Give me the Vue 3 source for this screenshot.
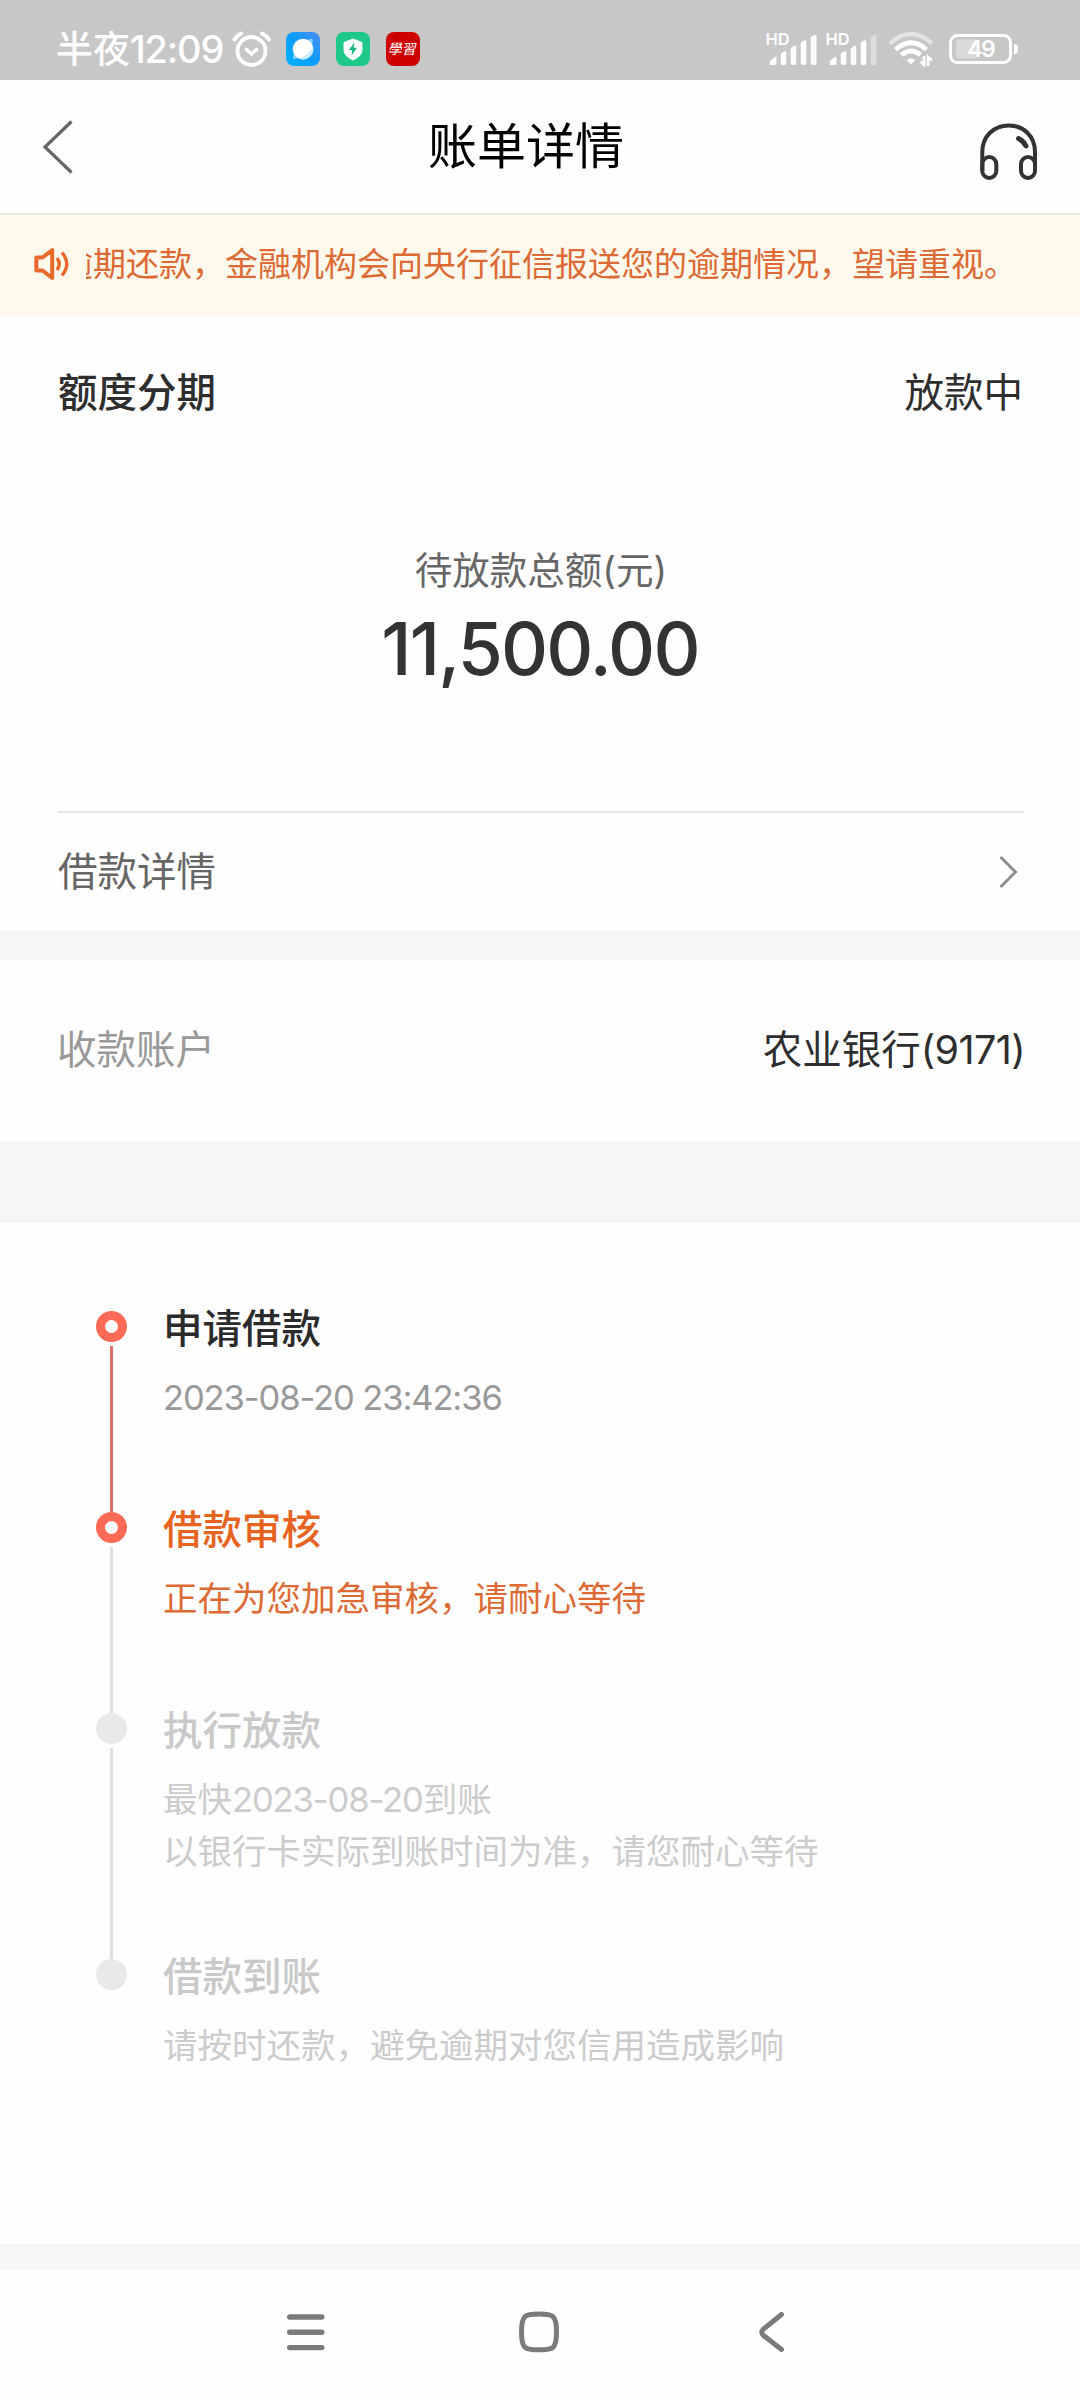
<script setup>
const steps = [
  { title: '申请借款', lines: [['', '2023-08-20 23:42:36', '']], state: 'done', line: 'red' },
  { title: '借款审核', lines: [['正在为您加急审核，请耐心等待', '', '']], state: 'active', line: 'gray' },
  { title: '执行放款', lines: [['最快', '2023-08-20', '到账'], ['以银行卡实际到账时间为准，请您耐心等待', '', '']], state: 'todo', line: 'gray' },
  { title: '借款到账', lines: [['请按时还款，避免逾期对您信用造成影响', '', '']], state: 'todo', line: '' },
]
</script>

<template>
  <div class="screen">
    <div class="status">
      <span class="clock">半夜<b>12:09</b></span>
      <svg class="alarm" width="40" height="36" viewBox="0 0 40 36" fill="none" stroke="#fff" stroke-linecap="round">
        <circle cx="19.5" cy="20" r="14" stroke-width="3.8" />
        <path d="M2.500 8.500 Q5 4.500 9 2.500 M30 2.500 Q34.500 4.500 37 8.500" stroke-width="3.800" />
        <path d="M14.500 18.500 L19.500 23 L24.500 18.500" stroke-width="3.600" stroke-linejoin="round" />
      </svg>
      <svg class="app app-blue" width="34" height="34" viewBox="0 0 34 34">
        <defs>
          <linearGradient id="blue" x1="0" y1="1" x2="1" y2="0">
            <stop offset="0" stop-color="#00b4ff" /><stop offset=".5" stop-color="#0c9dff" /><stop offset="1" stop-color="#4b8cf2" />
          </linearGradient>
        </defs>
        <rect width="34" height="34" rx="8" fill="url(#blue)" />
        <path d="M7.500 27 Q6 26 8 22 L22 8 Q26 6 26.500 7.500 Q27.500 10 24 18 Q16 27 7.500 27Z" fill="#8fd2ff" />
        <circle cx="17" cy="17" r="10.300" fill="#fff" />
        <path d="M27.200 15 A10.300 10.300 0 0 1 13 26.500 Q22 24 27.200 15Z" fill="#c9e8ff" />
      </svg>
      <svg class="app" width="34" height="34" viewBox="0 0 34 34">
        <rect width="34" height="34" rx="8" fill="#1ec98a" />
        <path d="M17 7 L26 10.500 V18 Q26 24 17 28 Q8 24 8 18 V10.500Z" fill="#fff" stroke="#fff" stroke-linejoin="round" />
        <path d="M18.500 10.500 L12.800 18 H16.300 L15.500 23.500 L21 15.800 H17.700Z" fill="#16b57b" />
      </svg>
      <svg class="app" width="34" height="34" viewBox="0 0 34 34">
        <rect width="34" height="34" rx="8" fill="#cd0000" />
        <text x="17" y="22.500" transform="skewX(-10) translate(3 0)" text-anchor="middle" font-family="Noto Sans CJK TC, sans-serif" font-size="14" fill="#fff">學習</text>
      </svg>

      <span class="grow"></span>

      <svg v-for="n in 2" :key="n" class="signal" width="53" height="50" viewBox="-2 -8 53 50">
        <text x="-1.5" y="12.500" font-family="Inter, sans-serif" font-weight="600" font-size="16.5" fill="#fff">HD</text>
        <g fill="#fff">
          <path d="M2.700 33 V30 Q3 29 5 27.300 L7 25.500 Q9.500 24 9.500 26 V31 Q9.500 33 8 33Z" />
          <path d="M13.700 31 V22.500 Q13.700 21.500 14.700 21 L17 19.500 Q19.300 18.500 19.300 20.500 V31 Q19.300 33 17 33 H16 Q13.700 33 13.700 31Z" />
          <path d="M23.700 31 V17 Q23.700 16 24.700 15.500 L27 14 Q29.300 13 29.300 15 V31 Q29.300 33 27 33 H26 Q23.700 33 23.700 31Z" />
          <path d="M33.700 31 V11.500 Q33.700 10.500 34.700 10 L37 8.500 Q39.300 7.500 39.300 9.500 V31 Q39.300 33 37 33 H36 Q33.700 33 33.700 31Z" />
          <path :opacity="n === 2 ? 0.4 : 1" d="M43.700 31 V6 Q43.700 5 44.700 4.500 L47 3 Q49.500 2 49.500 4 V31 Q49.500 33 47.500 33 H46 Q43.700 33 43.700 31Z" />
        </g>
      </svg>
      <svg class="wifi" width="48" height="36" viewBox="0 0 48 36" fill="none" stroke="#fff">
        <path d="M2 12.500 Q23 -6.500 44 12.500" stroke-width="4.200" opacity=".5" />
        <path d="M7.500 18.500 Q23 5 38.500 18.500" stroke-width="4.600" />
        <path d="M13.500 24 Q23 16 32.500 24" stroke-width="4.600" />
        <path d="M23 33.500 L18.700 29 Q23 25.500 27.300 29Z" fill="#fff" stroke="none" />
        <path d="M36 25 V34 L32.500 30.500 M40 35 V26 L44 29.500" stroke-width="2.800" />
      </svg>
      <svg class="battery" width="70" height="32" viewBox="0 0 70 32">
        <rect x="1.500" y="2.500" width="60" height="27" rx="7" fill="none" stroke="#fff" stroke-width="3" />
        <path d="M9 6.500 H27 V25.500 H9 Q7 25.500 7 23.500 V8.500 Q7 6.500 9 6.500Z" fill="#fff" opacity=".35" />
        <path d="M65 11 H66 Q69 11 69 16 Q69 21 66 21 H65Z" fill="#fff" />
        <text x="31.700" y="24.300" text-anchor="middle" font-family="Inter, sans-serif" font-weight="600" font-size="23" letter-spacing="-1.5" fill="#fff">49</text>
      </svg>
    </div>

    <header class="header">
      <svg class="back" width="32" height="56" viewBox="0 0 32 56" fill="none" stroke="#666" stroke-width="3.200">
        <path d="M29.500 2.500 L3 28 L29.500 53.500" />
      </svg>
      <h1>账单详情</h1>
      <svg class="service" width="58" height="58" viewBox="0 0 58 58" fill="none" stroke="#333" stroke-width="4">
        <path d="M2.300 48 V29 C2.300 13 14 2.500 28.700 2.500 S55 13 55 29 V48" />
        <rect x="2.300" y="34" width="14" height="21" rx="7" />
        <rect x="41" y="34" width="14" height="21" rx="7" />
        <path d="M38.500 15.500 Q43.500 18 46 23" stroke-width="5" stroke-linecap="round" />
      </svg>
    </header>

    <div class="notice">
      <svg width="36" height="34" viewBox="0 0 36 34" fill="none" stroke="#e8692c" stroke-width="4">
        <path d="M2.300 10.500 H8.500 L18.200 3 V31 L8.500 23.500 H2.300Z" stroke-linejoin="round" />
        <path d="M23 11 Q27.500 17 23 23" stroke-width="3.400" />
        <path d="M28 5.500 Q37.500 17 28 28.500" stroke-width="3.400" />
      </svg>
      <div class="marquee"><p>逾期还款，金融机构会向央行征信报送您的逾期情况，望请重视。</p></div>
    </div>

    <section class="summary">
      <div class="row top"><span class="strong">额度分期</span><span>放款中</span></div>
      <p class="label">待放款总额(元)</p>
      <p class="amount">11,500.00</p>
      <div class="row detail">
        <span>借款详情</span>
        <svg width="20" height="34" viewBox="0 0 20 34" fill="none" stroke="#8c8c8c" stroke-width="2.800">
          <path d="M1.500 2 L16.500 17 L1.500 32" />
        </svg>
      </div>
    </section>

    <section class="row account">
      <span class="muted">收款账户</span><span class="bank">农业银行<i>(9171)</i></span>
    </section>

    <section class="timeline">
      <div v-for="s in steps" :key="s.title" class="step" :class="[s.state, { tall: s.lines.length > 1 }]">
        <div class="rail">
          <span class="dot"></span>
          <span v-if="s.line" class="line" :class="s.line"></span>
        </div>
        <div class="body">
          <h2>{{ s.title }}</h2>
          <p v-for="(l, i) in s.lines" :key="i">{{ l[0] }}<span v-if="l[1]" class="date">{{ l[1] }}</span>{{ l[2] }}</p>
        </div>
      </div>
    </section>

    <nav class="nav">
      <svg width="40" height="42" viewBox="0 0 40 42" stroke="#7b7b7b" stroke-width="5.400" stroke-linecap="round">
        <path d="M3.700 6 H35.800 M3.700 21.300 H35.800 M3.700 36.600 H35.800" />
      </svg>
      <svg class="home" width="42" height="42" viewBox="0 0 42 42" fill="none" stroke="#7b7b7b" stroke-width="5">
        <path d="M21 3 C35 3 38.500 4 38.500 21 C38.500 38 35 38.800 21 38.800 C7 38.800 3.500 38 3.500 21 C3.500 4 7 3 21 3Z" />
      </svg>
      <svg width="28" height="42" viewBox="0 0 28 42" fill="none" stroke="#7b7b7b" stroke-width="5" stroke-linecap="round">
        <path d="M23.500 3.500 L5.500 18 Q2 21.200 5.500 24.500 L23.500 38.500" />
      </svg>
    </nav>
  </div>
</template>

<style>
body { margin: 0; background: #fff; }
</style>

<style scoped>
.screen {
  width: 1080px;
  height: 2400px;
  overflow: hidden;
  display: flex;
  flex-direction: column;
  background: #fefefe;
  color: #333;
  font-family: Inter, "Noto Sans CJK SC", sans-serif;
}
h1, h2, p { margin: 0; font-weight: 400; white-space: nowrap; }
svg { display: block; flex: none; }

.status {
  box-sizing: border-box;
  height: 80px;
  padding: 18px 61px 0 56px;
  display: flex;
  align-items: center;
  background: #c7c7c7;
}
.clock { width: 176px; color: #fff; font-size: 37px; line-height: 50px; font-weight: 500; white-space: nowrap; }
.clock b { font-size: 38px; font-weight: 500; letter-spacing: -1.2px; }
.app { margin-right: 16px; }
.app-blue { margin-left: 14px; }
.grow { flex: 1; }
.signal { margin-right: 7px; }
.wifi { margin: 0 13px 0 3px; }

.header {
  height: 133px;
  padding: 0 42px;
  border-bottom: 2px solid #ebe8e4;
  display: flex;
  align-items: center;
  justify-content: space-between;
  background: #fefefe;
}
.header h1 { margin-right: 2px; font-size: 49px; line-height: 70px; color: #000; }
.service { margin-top: 11px; }

.notice {
  box-sizing: border-box;
  height: 101px;
  padding: 0 0 3px 34px;
  display: flex;
  align-items: center;
  background: #fef9ec;
}
.marquee { margin-left: 16px; overflow: hidden; flex: 1; }
.marquee p { margin-left: -26px; font-size: 33px; line-height: 50px; color: #dd6a34; }

.summary { height: 615px; padding: 0 56px 0 58px; }
.row { display: flex; justify-content: space-between; align-items: center; font-size: 39.500px; white-space: nowrap; }
.top { padding: 47px 1px 0 0; line-height: 60px; color: #2e2e2e; }
.strong { font-weight: 500; }
.label { margin-top: 118px; text-align: center; font-size: 37.500px; line-height: 60px; color: #666; }
.amount { padding-right: 2px; text-align: center; font-size: 73px; font-weight: 500; line-height: 96px; letter-spacing: -1.800px; }
.detail { margin-top: 114px; height: 113px; border-top: 2px solid #e7e7e7; padding-right: 5px; color: #666; }
.detail span { margin-bottom: 2px; }
.detail svg { margin-top: 5px; }
.account {
  height: 173px;
  padding: 0 55px 8px 57px;
  border-top: 29px solid #f6f6f9;
  border-bottom: 82px solid #f5f6f8;
}
.muted { color: #999; }
.bank { color: #2e2e2e; }
.bank i { font-style: normal; letter-spacing: -.6px; }

.timeline {
  box-sizing: border-box;
  height: 1021px;
  padding: 88px 0 0 96px;
}
.step { display: flex; height: 201px; }
.step.tall { height: 245.500px; }
.rail { width: 31px; display: flex; flex-direction: column; align-items: center; }
.dot { box-sizing: border-box; flex: none; width: 31px; height: 31px; border-radius: 50%; border: 9px solid #ff6a56; background: #fff; }
.todo .dot { border: 0; background: #e9e9e9; }
.line { width: 3px; flex: 1; margin-top: 4px; background: #dedede; }
.line.red { background: #db7168; }
.body { margin-left: 36px; }
.body h2 { margin-top: -12px; font-size: 39.500px; line-height: 60px; font-weight: 500; color: #2b2b2b; }
.body p { font-size: 34.500px; line-height: 52px; color: #999; }
.body h2 + p { margin-top: 13px; }
.date { letter-spacing: -1.100px; }
.active h2 { color: #e6641f; }
.active p { color: #dd6a34; }
.todo h2 { color: #c9c9c9; }
.todo p { color: #ccc; }

.nav {
  flex: 1;
  border-top: 26px solid #f6f6f9;
  padding: 0 294px 6px 286px;
  display: flex;
  align-items: center;
  justify-content: space-between;
  background: #fefefe;
}
.home { margin-right: 6px; }
</style>
